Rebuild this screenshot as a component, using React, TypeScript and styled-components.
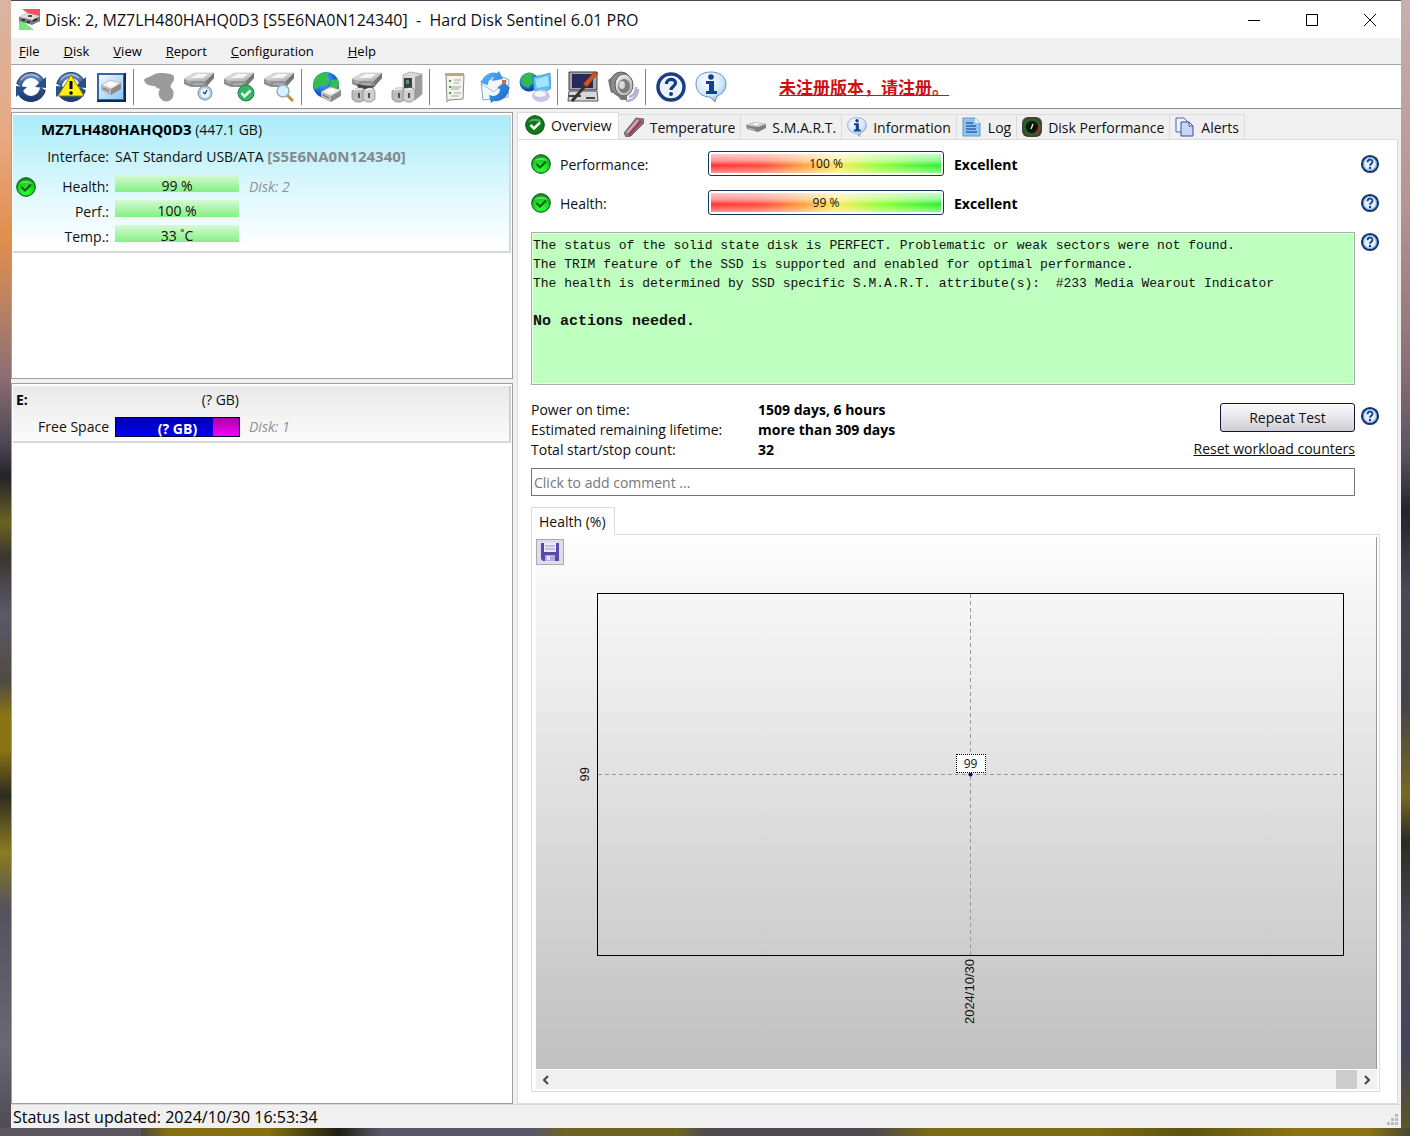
import React from "react";
import styled, { createGlobalStyle, css } from "styled-components";

const Global = createGlobalStyle`
  * { box-sizing: border-box; }
  body { margin: 0; background: #4b4753; }
  body, button, input { font-family: "Open Sans", "Noto Sans", sans-serif; font-size: 14px; color: #111; }
  button { margin: 0; padding: 0; border: 0; background: none; }
  svg { display: block; flex: none; }
`;

/* ---------- Window frame ---------- */

const Desktop = styled.div`
  min-height: 100vh;
  display: flex;
  padding: 1px 9px 8px 11px;
  background:
    linear-gradient(90deg, #5b5560 0 10%, #4c4a3a 10%, #86700f 12% 19%, #1e1e14 24%, #5a5668 27% 38%, #6e6320 40% 48%, #4e4a50 50% 62%, #7b6a12 66% 78%, #5c5310 84%, #8a7413 92% 97%, #4a4632) bottom / 100% 8px no-repeat,
    linear-gradient(180deg, #c8b0ac 0, #b79490 18%, #8d7078 32%, #5a5260 40%, #23242c 45%, #4b4856 52%, #46434a 62%, #77691f 70%, #2d2c22 74%, #4b4958 82%, #454558 93%, #5f5722) right / 9px 100% no-repeat,
    linear-gradient(180deg, #d8b4a4 0, #e8a983 12%, #e08f4c 21%, #c28460 26%, #8d6f74 33%, #4e4753 39%, #23232a 42%, #6b6320 46%, #3a3630 49%, #5c5868 54%, #4f4b42 60%, #8a7414 63% 66%, #2d2b22 70%, #8b7b20 75%, #55525e 80%, #6a6674 92%, #4c4954) left / 11px 100% no-repeat;
`;

const Window = styled.main`
  flex: 1;
  min-width: 0;
  display: flex;
  flex-direction: column;
  background: #f0f0f0;
`;

const TitleBar = styled.header`
  height: 37px;
  display: flex;
  align-items: center;
  padding: 0 2px 0 8px;
  background: #fff;
`;

const Title = styled.h1`
  flex: 1;
  margin: 0 0 0 5px;
  font-size: 16px;
  font-weight: 400;
  white-space: pre;
`;

const CaptionButton = styled.button`
  width: 58px;
  height: 37px;
  display: grid;
  place-items: center;
`;

const MenuBar = styled.nav`
  height: 27px;
  display: flex;
  align-items: center;
  gap: 24px;
  padding-left: 8px;
  border-bottom: 1px solid #a5a5a5;
`;

const MenuItem = styled.button<{ $wide?: boolean }>`
  margin-right: ${(p) => (p.$wide ? "10px" : "0")};
  font-size: 13px;
  color: #000;
  &::first-letter { text-decoration: underline; }
`;

const Toolbar = styled.div`
  height: 43px;
  display: flex;
  align-items: center;
  background: #fff;
`;

const ToolButton = styled.button`
  width: 40px;
  height: 40px;
  display: grid;
  place-items: center;
`;

const ToolSeparator = styled.span`
  width: 6px;
  height: 36px;
  margin-left: 2px;
  border-left: 1px solid #808080;
`;

const RegisterLink = styled.a`
  margin-left: 48px;
  font: 700 17px/24px "Noto Sans CJK SC", sans-serif;
  color: #d00f0f;
  text-decoration: underline;
`;

const Workspace = styled.div`
  flex: 1;
  display: grid;
  grid-template-columns: 502px minmax(0, 1fr);
  column-gap: 4px;
  padding-right: 3px;
  border-top: 1px solid #8f8f8f;
  box-shadow: inset 0 2px #f0f0f0;
`;

const Sidebar = styled.aside`
  display: flex;
  flex-direction: column;
  gap: 4px;
  padding-top: 3px;
`;

const ListPane = styled.section<{ $grow?: boolean }>`
  ${(p) => (p.$grow ? css`flex: 1;` : css`height: 267px;`)}
  padding: 2px 1px 1px;
  border: 1px solid #a0a0a0;
  background: #fff;
`;

/* ---------- Disk cards ---------- */

const Card = styled.article<{ $tone: "blue" | "grey" }>`
  display: grid;
  grid-template-columns: 20px 74px 124px 1fr;
  padding: 0 0 2px 2px;
  border-right: 2px solid ${(p) => (p.$tone === "blue" ? "#cfdcdf" : "#d0d0d0")};
  border-bottom: 2px solid #d8d8d8;
  background: ${(p) =>
    p.$tone === "blue"
      ? "linear-gradient(#a9ecfa, #e2f9fd 60%, #fff)"
      : "linear-gradient(#e9e9e9, #fbfbfb)"};
`;

const CardTitle = styled.div`
  grid-column: 1 / -1;
  line-height: 28px;
  padding-left: 26px;
`;

const CardName = styled.strong`
  font-size: 15px;
  color: #000;
`;

const Label = styled.span`
  grid-column: 2;
  line-height: 25px;
  text-align: right;
  white-space: nowrap;
`;

const Wide = styled.span`
  grid-column: 3 / -1;
  padding-left: 6px;
  padding-bottom: 5px;
  line-height: 25px;
`;

const Serial = styled.strong`
  font-size: 15px;
  color: #84898c;
`;

const StateIcon = styled.span`
  grid-column: 1;
  padding: 3px 1px 2px;
`;

const GreenBar = styled.div`
  height: 17px;
  margin: 1px 0 0 6px;
  background: linear-gradient(#d6fbd4, #84f084);
  line-height: 22px;
  text-align: center;
  width: 124px;
`;

const Aside = styled.em`
  padding-left: 16px;
  line-height: 25px;
  color: #8c9499;
`;

const DriveLetter = styled.strong`
  grid-column: 1;
  padding-left: 1px;
  line-height: 28px;
  color: #000;
`;

const DriveSize = styled.span`
  grid-column: 2 / 4;
  margin-right: -6px;
  line-height: 28px;
  text-align: right;
`;

const SpaceBar = styled.div`
  width: 125px;
  height: 20px;
  margin: 3px 0 0 6px;
  border: 1px solid #000030;
  background:
    linear-gradient(#a800a8, #f800f8) right / 21% 100% no-repeat,
    linear-gradient(#0000b4, #0000f0);
  color: #fff;
  font-weight: 700;
  line-height: 21px;
  text-align: center;
`;

/* ---------- Detail area ---------- */

const Details = styled.section`
  display: flex;
  flex-direction: column;
  min-width: 0;
  padding-top: 3px;
`;

const TabList = styled.div`
  display: flex;
  align-items: flex-end;
  height: 27px;
`;

const Tab = styled.button<{ $active?: boolean }>`
  display: flex;
  align-items: center;
  gap: 6px;
  white-space: nowrap;
  height: ${(p) => (p.$active ? "28px" : "25px")};
  margin-bottom: ${(p) => (p.$active ? "-1px" : "0")};
  padding: ${(p) => (p.$active ? "0 6px 3px 7px" : "0 5px")};
  border: 1px solid #dcdcdc;
  border-width: ${(p) => (p.$active ? "1px 1px 0" : "1px 1px 0 0")};
  background: ${(p) => (p.$active ? "#fff" : "#f0f0f0")};
`;

const Page = styled.div`
  flex: 1;
  display: flex;
  flex-direction: column;
  padding: 4px 17px 11px 13px;
  border: 1px solid #dcdcdc;
  background: #fff;
`;

const Metric = styled.div`
  display: grid;
  grid-template-columns: 20px 157px 236px 1fr 20px;
  align-items: center;
  height: 39px;
`;

const MetricName = styled.span`
  padding-left: 9px;
  padding-top: 2px;
`;

const Gauge = styled.div`
  height: 25px;
  padding: 2px;
  border: 1px solid #17365d;
  border-radius: 3px;
`;

const GaugeFill = styled.div`
  height: 19px;
  background:
    linear-gradient(rgba(255, 255, 255, 0.75), rgba(255, 255, 255, 0.5) 35%, rgba(255, 255, 255, 0.05) 60%, rgba(255, 255, 255, 0.5)),
    linear-gradient(90deg, #ff2828, #ff4030 22%, #ff9a30 40%, #ffe850 55%, #8aff28 74%, #20f028);
  font-size: 12px;
  line-height: 20px;
  text-align: center;
`;

const Verdict = styled.strong`
  padding: 2px 0 0 10px;
  color: #000;
`;

const HelpButton = styled.button`
  width: 20px;
  height: 20px;
`;

const WithHelp = styled.div`
  display: grid;
  grid-template-columns: minmax(0, 1fr) 20px;
  column-gap: 5px;
`;

const Message = styled.div`
  height: 153px;
  margin-top: 10px;
  padding: 3px 1px;
  border: 1px solid #a3b3a3;
  box-shadow: inset 0 0 0 1px #e6ffe6;
  background: #bfffbf;
  font: 13px/19px "Liberation Mono", monospace;
  white-space: pre-wrap;
`;

const MessageStrong = styled.strong`
  font-size: 15px;
`;

const MessageHelp = styled.div`
  padding-top: 10px;
`;

const Summary = styled.div`
  display: flex;
  justify-content: space-between;
  padding-top: 15px;
`;

const Facts = styled.dl`
  display: grid;
  grid-template-columns: 227px auto;
  align-content: start;
  margin: 0;
  line-height: 20px;
`;

const Fact = styled.dd`
  margin: 0;
  font-weight: 700;
  color: #000;
`;

const Actions = styled.div`
  display: flex;
  flex-direction: column;
  align-items: flex-end;
  padding-top: 3px;
`;

const RepeatButton = styled.button`
  width: 135px;
  height: 29px;
  border: 1px solid #14143c;
  border-radius: 3px;
  background: linear-gradient(#fafafa, #e8e6ea 50%, #cfcdd2);
`;

const ResetLink = styled.a`
  margin-top: 7px;
  line-height: 20px;
  color: #111;
`;

const SummaryHelp = styled.div`
  padding-top: 21px;
`;

const Comment = styled.input`
  width: calc(100% - 25px);
  height: 28px;
  margin-top: 8px;
  padding: 0 2px;
  border: 1px solid #767676;
  background: #fff;
  &::placeholder { color: #787878; opacity: 1; }
`;

const ChartTab = styled.button`
  align-self: flex-start;
  height: 28px;
  margin: 11px 0 -1px;
  padding: 0 8px 1px 7px;
  border: 1px solid #dcdcdc;
  border-bottom: 0;
  background: #fff;
  z-index: 1;
`;

const ChartPanel = styled.section`
  flex: 1;
  display: flex;
  flex-direction: column;
  padding: 2px 2px 2px 4px;
  border: 1px solid #dcdcdc;
`;

const Chart = styled.div`
  flex: 1;
  display: grid;
  grid-template-columns: 61px minmax(0, 1fr) 32px;
  grid-template-rows: 56px minmax(200px, 1fr) 113px;
  border-right: 1px solid #999;
  background: linear-gradient(#fdfdfd, #c0c0c0);
`;

const SaveButton = styled.button`
  width: 28px;
  height: 26px;
  margin-top: 2px;
  display: grid;
  place-items: center;
  border: 1px solid #a8a8b8;
  background: #dedee8;
`;

const AxisText = styled.span`
  writing-mode: vertical-rl;
  transform: rotate(180deg);
  font: 13px/16px "Liberation Sans", Arial, sans-serif;
`;

const YAxis = styled.div`
  grid-area: 2 / 1;
  display: flex;
  align-items: center;
  justify-content: flex-end;
  padding-right: 4px;
`;

const XAxis = styled.div`
  grid-area: 3 / 2;
  display: flex;
  justify-content: center;
  align-items: flex-start;
  padding: 3px 2px 0 0;
`;

const Plot = styled.div`
  grid-area: 2 / 2;
  position: relative;
  border: 1px solid #000;
`;

const PlotLines = styled.svg`
  width: 100%;
  height: 100%;
`;

const PointLabel = styled.span`
  position: absolute;
  left: 50%;
  bottom: calc(50% + 2px);
  transform: translateX(-50%);
  width: 30px;
  border: 1px dotted #000;
  background: #fff;
  font-size: 12px;
  line-height: 17px;
  text-align: center;
`;

const ScrollBar = styled.div`
  height: 19px;
  margin-top: 1px;
  display: flex;
  background: #f0f0f0;
`;

const ScrollArrow = styled.button`
  width: 20px;
  display: grid;
  place-items: center;
`;

const ScrollTrack = styled.div`
  flex: 1;
  display: flex;
  justify-content: flex-end;
`;

const ScrollThumb = styled.div`
  width: 21px;
  background: #cdcdcd;
`;

const StatusBar = styled.footer`
  height: 24px;
  display: flex;
  align-items: center;
  justify-content: space-between;
  padding: 1px 2px 0;
  border-top: 1px solid #d7d7d7;
  font-size: 16px;
  line-height: 22px;
  color: #000;
`;

const Grip = styled.span`
  align-self: flex-end;
  padding-bottom: 2px;
`;

/* ---------- Icons ---------- */

const IconDefs = () => (
  <svg width="0" height="0" style={{ position: "absolute" }} aria-hidden="true">
    <defs>
      <linearGradient id="navy" x1="0" y1="0" x2="0" y2="1"><stop offset="0" stopColor="#6f8fbe" /><stop offset=".45" stopColor="#33598f" /><stop offset="1" stopColor="#1b3f75" /></linearGradient>
      <linearGradient id="steel" x1="0" y1="0" x2="1" y2="1"><stop offset="0" stopColor="#f4f4f4" /><stop offset="1" stopColor="#aaaaaa" /></linearGradient>
      <linearGradient id="sky" x1="0" y1="0" x2="1" y2="1"><stop offset="0" stopColor="#f0faff" /><stop offset="1" stopColor="#8cc4f2" /></linearGradient>
      <linearGradient id="blue" x1="0" y1="0" x2="1" y2="1"><stop offset="0" stopColor="#5db7ff" /><stop offset="1" stopColor="#1663c4" /></linearGradient>
      <radialGradient id="globe" cx=".35" cy=".3" r=".8"><stop offset="0" stopColor="#6fc6ff" /><stop offset=".6" stopColor="#1566cf" /><stop offset="1" stopColor="#0a2d80" /></radialGradient>
      <radialGradient id="ok" cx=".5" cy=".75" r=".8"><stop offset="0" stopColor="#33ff3c" /><stop offset=".6" stopColor="#16cf20" /><stop offset="1" stopColor="#067a0c" /></radialGradient>
      <radialGradient id="bubble" cx=".4" cy=".3" r=".8"><stop offset="0" stopColor="#fff" /><stop offset=".6" stopColor="#cfe6fa" /><stop offset="1" stopColor="#7fa9d4" /></radialGradient>
    </defs>
  </svg>
);

const Drive = () => (
  <g>
    <path d="M1 8 12 2h19v5l-8 9H8l-7-3z" fill="#8f8f8f" />
    <path d="M1 8 12 2h19l-8 8H7z" fill="url(#steel)" stroke="#b4b4b4" strokeWidth=".5" />
    <path d="M23 10l8-8v5l-8 9z" fill="#777" />
    <path d="M8 7l7-4h10l-5 4z" fill="#fff" opacity=".8" />
    <path d="M3 10l5 2M10 13h10" stroke="#c6c6c6" />
  </g>
);

const SmallDrive = ({ x = 0, y = 0 }: { x?: number; y?: number }) => (
  <g transform={`translate(${x} ${y})`}>
    <path d="M0 5 9 0l11 3v6l-10 6L0 10z" fill="#8a8a8a" />
    <path d="M0 5 9 0l11 3-10 6z" fill="#ececec" stroke="#b0b0b0" strokeWidth=".5" />
    <path d="M0 5l10 4v6L0 10z" fill="#b9b9b9" />
    <path d="M2 8l6 3" stroke="#666" />
    <ellipse cx="10" cy="4" rx="4" ry="2" fill="#fff" />
  </g>
);

const Sync = () => (
  <g>
    <circle cx="16" cy="16" r="12" fill="none" stroke="url(#navy)" strokeWidth="6" />
    <circle cx="16" cy="16" r="14.500" fill="none" stroke="#1b3c6c" />
    <path d="M21 12h11v8l-5-3zM11 20H0v-8l5 3z" fill="#fff" />
    <path d="M31 6v11l-11-1 4-4zM1 26V15l11 1-4 4z" fill="#27508a" />
    <path d="M6 9c4-6 13-7 18-2" fill="none" stroke="#b4c8e2" strokeWidth="1.500" opacity=".7" />
  </g>
);

const Plugs = () => (
  <g>
    <path d="M1 20l5-3h6l3 3v8l-5 3H5l-4-3z" fill="#bdbdbd" stroke="#858585" strokeWidth=".7" />
    <path d="M12 20l5-3h5l2 3v8l-4 3h-5l-3-3z" fill="#cfcfcf" stroke="#858585" strokeWidth=".7" />
    <path d="M3 19l4-1h4M14 19l4-1h3" stroke="#f4f4f4" strokeWidth="1.500" fill="none" />
    <path d="M8 22v5M18 22v5" stroke="#2a2a2a" strokeWidth="1.500" />
  </g>
);

const toolIcons: Record<string, React.ReactNode> = {
  Refresh: <Sync />,
  "Quick check": (
    <>
      <Sync />
      <path d="M16 4 29 25H3z" fill="#ffee12" stroke="#8b8312" strokeLinejoin="round" />
      <path d="M16 10v8" stroke="#000" strokeWidth="3" /><circle cx="16" cy="22" r="1.800" />
    </>
  ),
  "Disk view": (
    <>
      <path d="M2 2h29v29H2z" fill="#0c2660" />
      <path d="M2 2h27v27H2z" fill="#3563ad" /><path d="M4 4h24v24H4z" fill="url(#sky)" />
      <SmallDrive x={6} y={9} />
    </>
  ),
  "Short test": <path d="M1 9c2-3 6-3 9-5 4-3 16-2 20 0 2 3 1 6-1 8-1 2-2 3-1 5 3 2 3 6 2 9-2 5-9 6-12 2-3-3-3-7-1-10-2-1-4-1-5-3-4 0-10-1-11-6z" fill="#9b9b9b" />,
  "Surface test": (
    <><Drive /><circle cx="22" cy="22" r="7" fill="#b8cfde" stroke="#7890a2" /><circle cx="22" cy="22" r="4.500" fill="#eef8ff" /><path d="M22 23l2-4M22 23l-2-2" stroke="#25517f" strokeWidth="1.500" /></>
  ),
  "Extended test": (
    <><Drive /><circle cx="23" cy="22" r="8" fill="#36b564" stroke="#1d8345" /><path d="M18.500 22l3 3.500 6-6" fill="none" stroke="#eafff0" strokeWidth="2.500" /></>
  ),
  "Search disk": (
    <><Drive /><path d="M24 24l6 6" stroke="#c28a4a" strokeWidth="3" /><circle cx="20" cy="20" r="6" fill="#d5f0ff" stroke="#8fb0c4" strokeWidth="1.500" /></>
  ),
  "Network disks": (
    <>
      <circle cx="15" cy="14" r="13" fill="url(#globe)" />
      <path d="M5 6c4-5 10-5 13-4l-3 5 4 3-4 5-6-1-4 5-3-5zM20 9l7-1 1 7-5 5-4-4z" fill="#33c04a" />
      <SmallDrive x={10} y={16} />
    </>
  ),
  "Disk connect": <><Drive /><path d="M6 13l10 2 8 0-5 4H8z" fill="#444" /><Plugs /></>,
  "Port connect": (
    <>
      <path d="M12 4l7-3 12 2v20l-7 6-12-4z" fill="#d9d9d9" stroke="#9a9a9a" strokeWidth=".7" /><path d="M24 6l7-3v20l-7 6z" fill="#9c9c9c" />
      <path d="M13 7h8v10h-8z" fill="#33453a" /><path d="M15 9h3v4h-3z" fill="#6b8f76" /><Plugs />
    </>
  ),
  "Save report": (
    <>
      <path d="M7 4h18l-1 24-14 1-2 2z" fill="#f4f4ee" stroke="#8b8b82" /><path d="M6 2h19v3H6z" fill="#b9a985" />
      <path d="M10 10h2M10 16h2M10 22h2" stroke="#4d9a55" strokeWidth="2" /><path d="M15 9h7M15 12h5M12 16h10M12 18h8M15 22h7M12 25h8" stroke="#a5a5a5" strokeWidth="1.200" />
    </>
  ),
  "Send mail": (
    <>
      <path d="M2 10l22-4 6 3-1 17-25 3z" fill="#f2f7fc" stroke="#7fa8d2" /><path d="M3 13l12 8 13-11" fill="none" stroke="#a8c1da" />
      <path d="M2 12C4 4 12 0 18 2l2-2 4 8-11 2 2-4c-4 1-6 4-6 8zM30 18c-1 8-8 13-15 12l-3 2-2-8 4 1c4 0 7-3 7-7l-3-1 7-6 6 6z" fill="url(#blue)" />
      <path d="M23 9h4v4h-4z" fill="#d26a5a" />
    </>
  ),
  "Network settings": (
    <>
      <circle cx="10" cy="11" r="9.500" fill="url(#globe)" /><path d="M3 6c4-5 9-5 12-3l-3 5 3 3-6 6-6-3z" fill="#35b850" />
      <path d="M14 6c5-1 11-2 17-4l1 15c-3 4-13 5-17 2z" fill="#5bbdf5" stroke="#3284c0" strokeWidth=".7" /><path d="M16 8l13-3 1 10-12 2z" fill="#a5e2ff" />
      <path d="M20 18h7v4h-7z" fill="#8fb8dc" /><ellipse cx="22" cy="25" rx="9" ry="6" fill="#c9c5e4" /><ellipse cx="21" cy="23" rx="6" ry="3" fill="#f5f3fc" />
    </>
  ),
  Configuration: (
    <>
      <path d="M2 1h28v18H2z" fill="#a5a5aa" stroke="#3c3c40" /><path d="M5 3h21v14H5z" fill="#262a5a" />
      <path d="M2 20h28l1 10H1z" fill="#d8d8da" stroke="#55555a" /><path d="M2 25h12M19 27h9" stroke="#444" strokeWidth="2" />
      <path d="M31 2 20 16l-4-3L27 1z" fill="#d4541c" stroke="#7d2f0c" strokeWidth=".6" /><path d="M18 15 5 30" stroke="#333" strokeWidth="3" />
    </>
  ),
  Sounds: (
    <>
      <path d="M22 26c5-1 7-5 7-10M19 30c8 0 12-6 12-12" fill="none" stroke="#b4b0d4" strokeWidth="2.500" />
      <path d="M1 9l9-6v17l-6 2z" fill="#7d7d7d" />
      <ellipse cx="14" cy="13" rx="11" ry="12" fill="#8a8a8a" stroke="#606060" /><ellipse cx="17" cy="14" rx="9" ry="11" fill="url(#steel)" stroke="#5c5c5c" />
      <ellipse cx="17" cy="15" rx="6" ry="7" fill="#7c7c7c" /><ellipse cx="15" cy="14" rx="3" ry="4" fill="#d9d9d9" /><path d="M9 23l5 6 6 0v-4z" fill="#777" />
    </>
  ),
  Help: (
    <>
      <circle cx="16" cy="16" r="13" fill="#fff" stroke="#173f86" strokeWidth="3.500" /><circle cx="16" cy="16" r="10.500" fill="#e9f2fd" />
      <path d="M11.500 13c0-6 9-6 9-1 0 3.500-4.500 3.500-4.500 7" fill="none" stroke="#123a80" strokeWidth="3.200" /><circle cx="16" cy="23" r="2" fill="#123a80" />
    </>
  ),
  Information: (
    <>
      <path d="M16 1c9 0 15 5 15 12s-4 10-9 12l-2 6-5-5C7 26 1 21 1 13S7 1 16 1z" fill="url(#bubble)" stroke="#7195bb" />
      <circle cx="16" cy="6" r="2.800" fill="#153f92" /><path d="M11 10h8v10h3v3H11v-3h3v-7h-3z" fill="#153f92" />
    </>
  ),
};

const Icon32 = ({ name, size = 32 }: { name: string; size?: number }) => (
  <svg width={size} height={size} viewBox="0 0 32 32" aria-hidden="true">{toolIcons[name]}</svg>
);

const OkIcon = ({ dark }: { dark?: boolean }) => (
  <svg width="20" height="20" viewBox="0 0 20 20" aria-hidden="true">
    <circle cx="10" cy="10" r="9.300" fill={dark ? "#0d7a18" : "url(#ok)"} stroke="#064a0a" />
    <path d="M3.500 7C5 2.500 15 2.500 16.500 7 13 5.500 7 5.500 3.500 7z" fill="#fff" opacity=".35" />
    <path d="M5.500 10l3.500 3.500L15 7.500" fill="none" stroke={dark ? "#fff" : "#0b5b10"} strokeWidth={dark ? 2.5 : 2} />
  </svg>
);

const HelpIcon = () => (
  <svg width="20" height="20" viewBox="0 0 20 20" aria-hidden="true">
    <circle cx="10" cy="10" r="8" fill="#e6f1fc" stroke="#14356b" strokeWidth="2.200" />
    <circle cx="10" cy="10" r="6.400" fill="none" stroke="#5b9bd8" />
    <path d="M7.500 8.300c0-3.400 5-3.400 5-.6 0 2-2.500 2-2.500 4.100" fill="none" stroke="#14408c" strokeWidth="1.800" /><circle cx="10" cy="14" r="1.200" fill="#14408c" />
  </svg>
);

const AppIcon = () => (
  <svg width="21" height="21" viewBox="0 0 21 21" aria-hidden="true">
    <path d="M3 0h18v13z" fill="#ee5560" /><path d="M0 9l15 12H0z" fill="#7be486" />
    <path d="M0 8l8-4 13 3v5l-8 4-13-4z" fill="#777" /><path d="M0 8l8-4 13 3-8 4z" fill="#dcdcdc" /><path d="M3 11h3M8 13h3M14 12l4-2M9 7h4" stroke="#222" strokeWidth="1.500" />
  </svg>
);

const tabIcons: Record<string, React.ReactNode> = {
  Temperature: (
    <svg width="20" height="20" viewBox="0 0 20 20"><path d="M0 16 12 1l8 1v4L7 19l-5 1z" fill="#84747c" stroke="#5a4a52" strokeWidth=".7" /><path d="M3 16 14 3" stroke="#d9a8ba" strokeWidth="2" /><path d="M5 18 17 4" stroke="#a83262" strokeWidth="2" /></svg>
  ),
  "S.M.A.R.T.": (
    <svg width="20" height="20" viewBox="0 0 20 20"><path d="M0 8l8-3 12 2v4l-8 4-11-3z" fill="#808080" /><path d="M0 8l8-3 12 2-8 3z" fill="#d0d0d0" /><path d="M6 7l4-1 4 1-4 1z" fill="#fff" /><path d="M2 11l7 2" stroke="#c4c4c4" /></svg>
  ),
  Information: <Icon32 name="Information" size={20} />,
  Log: (
    <svg width="20" height="20" viewBox="0 0 20 20"><path d="M1 1h12l5 5v13H1z" fill="#8fc3f0" stroke="#5a9bd6" /><path d="M13 1v5h5z" fill="#e8f5ff" /><path d="M4 6h7M4 9h10M4 12h10M4 15h11" stroke="#2c65a8" strokeWidth="1.300" /></svg>
  ),
  "Disk Performance": (
    <svg width="20" height="20" viewBox="0 0 20 20"><rect width="20" height="20" rx="6" fill="#4a4036" /><circle cx="10" cy="10" r="7.500" fill="#0c1c0e" stroke="#23642c" strokeWidth="2.500" /><path d="M17 7a8 8 0 0 1-3 9" fill="none" stroke="#a0382a" strokeWidth="2" /><circle cx="10" cy="10" r="3" fill="#000" /><path d="M9 12l2-5" stroke="#f0e8d0" strokeWidth="1.500" /></svg>
  ),
  Alerts: (
    <svg width="20" height="20" viewBox="0 0 20 20"><path d="M1 1h8l3 3v11H1z" fill="#eef3ff" stroke="#4a62a8" /><path d="M6 5h8l4 4v10H6z" fill="#c8d6f6" stroke="#35509c" /><path d="M14 5v4h4z" fill="#fff" stroke="#35509c" /></svg>
  ),
};

const Chevron = ({ d }: { d: string }) => (
  <svg width="10" height="10" viewBox="0 0 10 10"><path d={d} fill="none" stroke="#444" strokeWidth="2" /></svg>
);

/* ---------- Data ---------- */

const menus = ["File", "Disk", "View", "Report", "Configuration", "Help"];

const toolGroups = [
  ["Refresh", "Quick check", "Disk view"],
  ["Short test", "Surface test", "Extended test", "Search disk"],
  ["Network disks", "Disk connect", "Port connect"],
  ["Save report", "Send mail", "Network settings"],
  ["Configuration", "Sounds"],
  ["Help", "Information"],
];

const readings = [
  { label: "Health:", value: "99 %", note: "Disk: 2" },
  { label: "Perf.:", value: "100 %" },
  { label: "Temp.:", value: "33 ˚C" },
];

const metrics = [
  { label: "Performance:", value: "100 %", verdict: "Excellent" },
  { label: "Health:", value: "99 %", verdict: "Excellent" },
];

const facts = [
  ["Power on time:", "1509 days, 6 hours"],
  ["Estimated remaining lifetime:", "more than 309 days"],
  ["Total start/stop count:", "32"],
];

const Help = () => (
  <HelpButton aria-label="Help"><HelpIcon /></HelpButton>
);

export default function App() {
  return (
    <Desktop>
      <Global />
      <IconDefs />
      <Window>
        <TitleBar>
          <AppIcon />
          <Title>{"Disk: 2, MZ7LH480HAHQ0D3 [S5E6NA0N124340]  -  Hard Disk Sentinel 6.01 PRO"}</Title>
          <CaptionButton aria-label="Minimize"><svg width="12" height="12"><path d="M0 6.500h12" stroke="#000" /></svg></CaptionButton>
          <CaptionButton aria-label="Maximize"><svg width="12" height="12"><path d="M.5.5h11v11H.5z" fill="none" stroke="#000" /></svg></CaptionButton>
          <CaptionButton aria-label="Close"><svg width="12" height="12"><path d="M0 0l12 12M12 0 0 12" stroke="#000" /></svg></CaptionButton>
        </TitleBar>

        <MenuBar>
          {menus.map((m) => <MenuItem key={m} $wide={m === "Configuration"}>{m}</MenuItem>)}
        </MenuBar>

        <Toolbar>
          {toolGroups.map((group, i) => (
            <React.Fragment key={group[0]}>
              {i > 0 && <ToolSeparator />}
              {group.map((name) => (
                <ToolButton key={name} aria-label={name}><Icon32 name={name} /></ToolButton>
              ))}
            </React.Fragment>
          ))}
          <RegisterLink href="#register">未注册版本，请注册。</RegisterLink>
        </Toolbar>

        <Workspace>
          <Sidebar>
            <ListPane>
              <Card $tone="blue">
                <CardTitle><CardName>MZ7LH480HAHQ0D3</CardName> (447.1 GB)</CardTitle>
                <Label>Interface:</Label>
                <Wide>SAT Standard USB/ATA <Serial>[S5E6NA0N124340]</Serial></Wide>
                {readings.map((r) => (
                  <React.Fragment key={r.label}>
                    {r.note && <StateIcon><OkIcon /></StateIcon>}
                    <Label>{r.label}</Label>
                    <GreenBar>{r.value}</GreenBar>
                    <Aside>{r.note}</Aside>
                  </React.Fragment>
                ))}
              </Card>
            </ListPane>
            <ListPane $grow>
              <Card $tone="grey">
                <DriveLetter>E:</DriveLetter>
                <DriveSize>(? GB)</DriveSize>
                <Label>Free Space</Label>
                <SpaceBar>(? GB)</SpaceBar>
                <Aside>Disk: 1</Aside>
              </Card>
            </ListPane>
          </Sidebar>

          <Details>
            <TabList role="tablist">
              <Tab role="tab" aria-selected="true" $active><OkIcon dark />Overview</Tab>
              {Object.keys(tabIcons).map((name) => (
                <Tab role="tab" key={name}>{tabIcons[name]}{name}</Tab>
              ))}
            </TabList>
            <Page>
              {metrics.map((m) => (
                <Metric key={m.label}>
                  <OkIcon />
                  <MetricName>{m.label}</MetricName>
                  <Gauge><GaugeFill>{m.value}</GaugeFill></Gauge>
                  <Verdict>{m.verdict}</Verdict>
                  <Help />
                </Metric>
              ))}

              <WithHelp>
                <Message>
                  {"The status of the solid state disk is PERFECT. Problematic or weak sectors were not found.\nThe TRIM feature of the SSD is supported and enabled for optimal performance.\nThe health is determined by SSD specific S.M.A.R.T. attribute(s):  #233 Media Wearout Indicator\n\n"}
                  <MessageStrong>No actions needed.</MessageStrong>
                </Message>
                <MessageHelp><Help /></MessageHelp>
              </WithHelp>

              <WithHelp>
                <Summary>
                  <Facts>
                    {facts.map(([term, value]) => (
                      <React.Fragment key={term}>
                        <dt>{term}</dt>
                        <Fact>{value}</Fact>
                      </React.Fragment>
                    ))}
                  </Facts>
                  <Actions>
                    <RepeatButton>Repeat Test</RepeatButton>
                    <ResetLink href="#reset">Reset workload counters</ResetLink>
                  </Actions>
                </Summary>
                <SummaryHelp><Help /></SummaryHelp>
              </WithHelp>

              <Comment aria-label="Comment" placeholder="Click to add comment ..." />

              <ChartTab>Health (%)</ChartTab>
              <ChartPanel>
                <Chart>
                  <SaveButton aria-label="Save chart">
                    <svg width="20" height="20" viewBox="0 0 20 20">
                      <path d="M1 1h18v18H3l-2-2z" fill="#5a48ac" /><path d="M4 1h12v9H4z" fill="#eceaf8" />
                      <path d="M5 4h10M5 7h10" stroke="#9c92cc" /><path d="M5 13h10v6H5z" fill="#b5aede" /><path d="M7 14h3v4H7z" fill="#e8e5f6" />
                    </svg>
                  </SaveButton>
                  <YAxis><AxisText>99</AxisText></YAxis>
                  <Plot>
                    <PlotLines aria-hidden="true">
                      <line x1="0" x2="100%" y1="50%" y2="50%" stroke="#999" strokeDasharray="4 3" shapeRendering="crispEdges" />
                      <line x1="50%" x2="50%" y1="0" y2="100%" stroke="#999" strokeDasharray="4 3" shapeRendering="crispEdges" />
                      <circle cx="50%" cy="50%" r="2" fill="#000080" />
                    </PlotLines>
                    <PointLabel>99</PointLabel>
                  </Plot>
                  <XAxis><AxisText>2024/10/30</AxisText></XAxis>
                </Chart>
                <ScrollBar>
                  <ScrollArrow aria-label="Scroll left"><Chevron d="M7 1 3 5l4 4" /></ScrollArrow>
                  <ScrollTrack><ScrollThumb /></ScrollTrack>
                  <ScrollArrow aria-label="Scroll right"><Chevron d="M3 1l4 4-4 4" /></ScrollArrow>
                </ScrollBar>
              </ChartPanel>
            </Page>
          </Details>
        </Workspace>

        <StatusBar>
          <span>Status last updated: 2024/10/30 16:53:34</span>
          <Grip>
            <svg width="12" height="12" fill="#bbb">
              <path d="M8 0h3v3H8zM4 4h3v3H4zM8 4h3v3H8zM0 8h3v3H0zM4 8h3v3H4zM8 8h3v3H8z" />
            </svg>
          </Grip>
        </StatusBar>
      </Window>
    </Desktop>
  );
}
